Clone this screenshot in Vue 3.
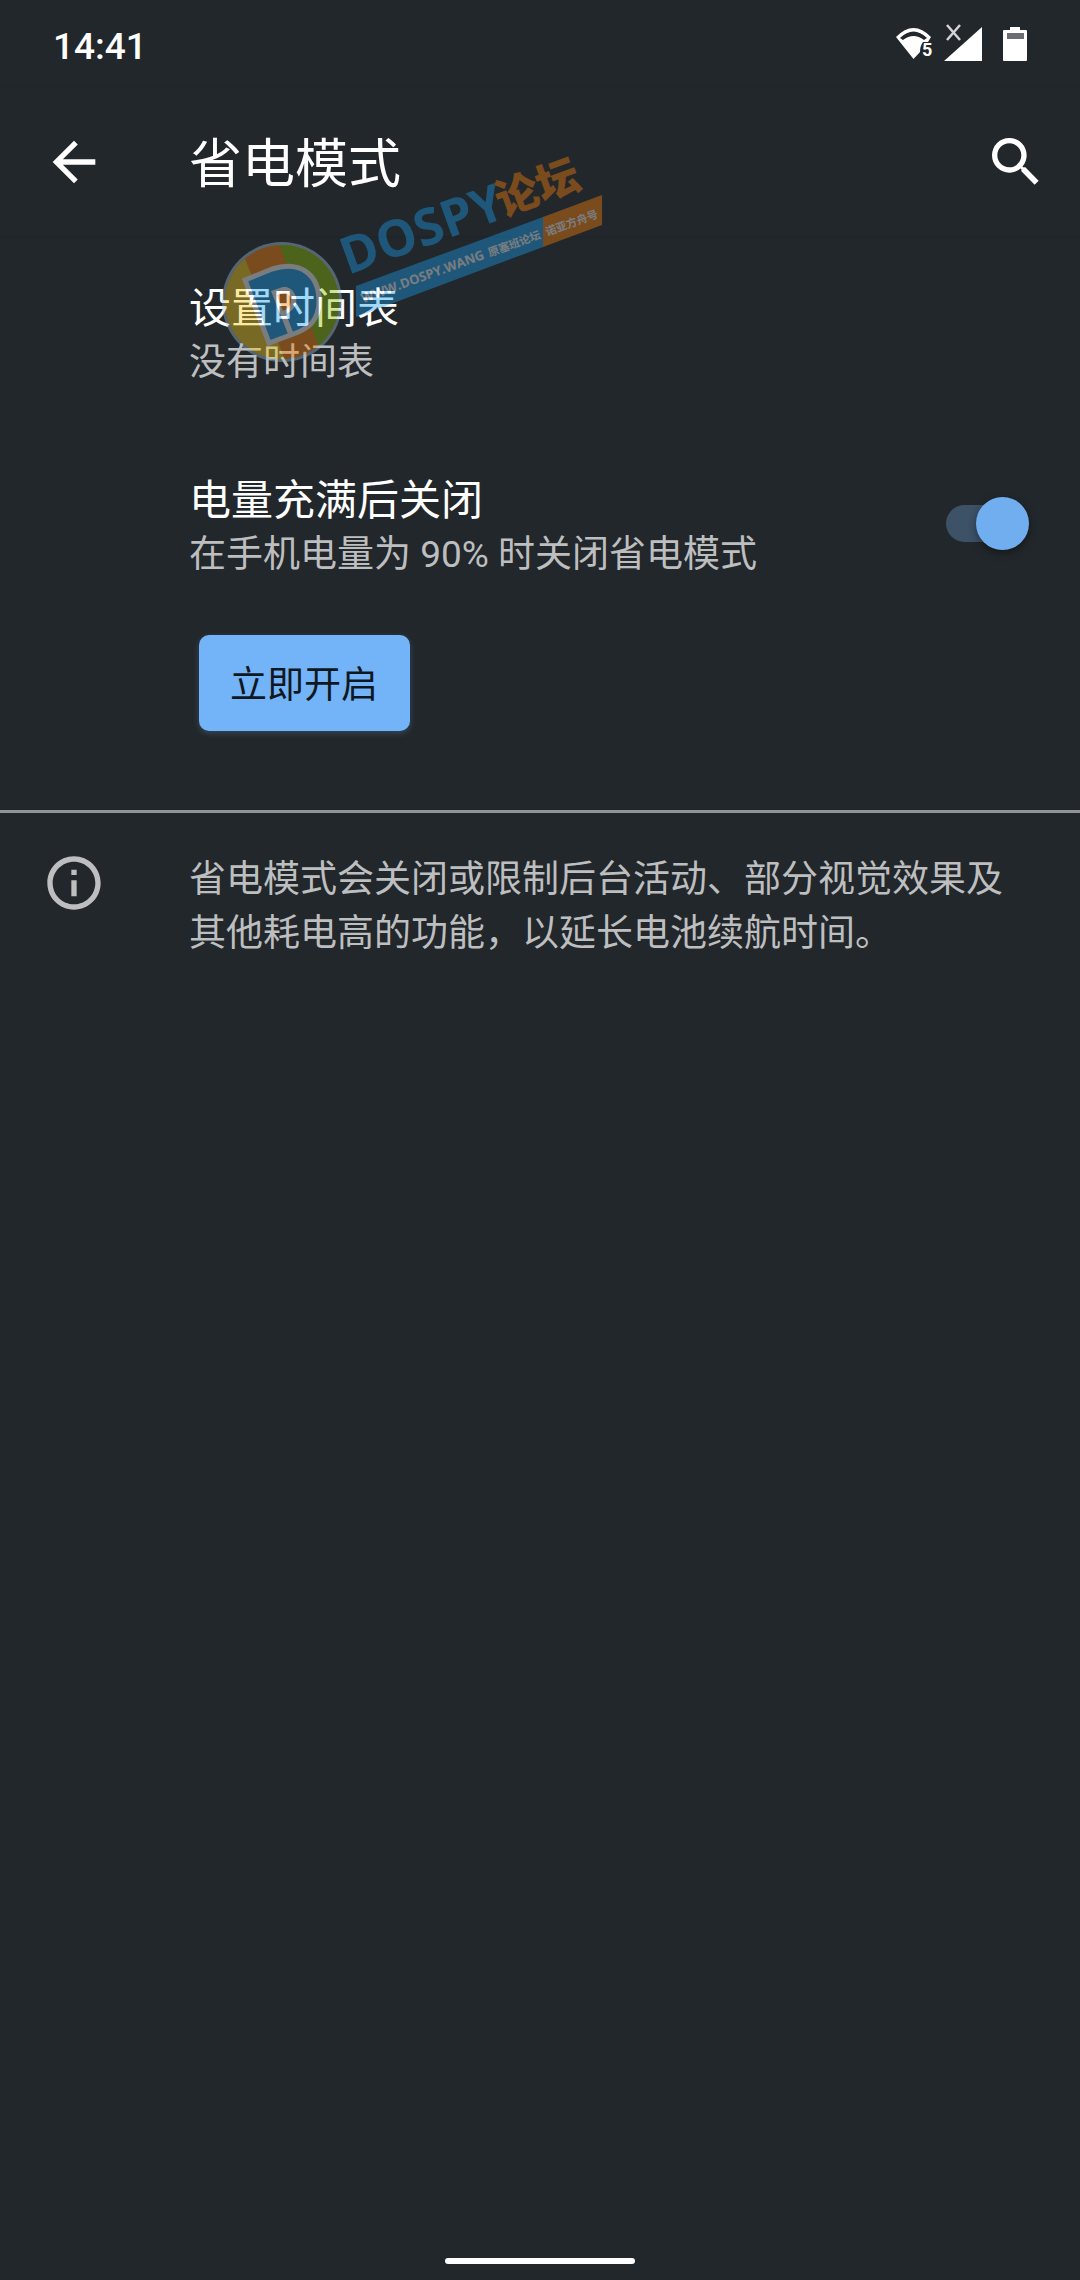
<template>
  <div class="screen">
    <div class="status-bar">
      <span class="clock">{{ clock }}</span>
      <div class="status-icons">
        <svg class="icon-wifi" viewBox="0 0 38 38" aria-hidden="true">
          <path d="M1 12Q18.500 -6 36 12L33 17H28Q25 21 25 27L18.500 34Z" fill="#fff" />
          <path d="M5 13Q18.500 0 32 13L29 15Q18.500 7 8 15Z" fill="#22272b" />
          <text x="27" y="31" class="wifi-band">5</text>
        </svg>
        <svg class="icon-signal" viewBox="0 0 40 38" aria-hidden="true">
          <path d="M39 2V36H1Z" fill="#fff" />
          <path d="M4 0L17 15M17 0L4 15" stroke="#d3d4d5" stroke-width="2.500" fill="none" />
        </svg>
        <svg class="icon-battery" viewBox="0 0 24 34" aria-hidden="true">
          <path d="M7 0H17V3H23Q24 3 24 4V33Q24 34 23 34H1Q0 34 0 33V4Q0 3 1 3H7Z" fill="#fff" />
          <path d="M4 6H21V12H4Z" fill="#6b6e70" />
        </svg>
      </div>
    </div>

    <header class="app-bar">
      <button class="icon-button" type="button" aria-label="返回">
        <svg viewBox="0 0 24 24"><path d="M20 11H7.830l5.590-5.590L12 4l-8 8 8 8 1.410-1.410L7.830 13H20z" fill="#fff" /></svg>
      </button>
      <h1 class="page-title">省电模式</h1>
      <button class="icon-button" type="button" aria-label="搜索">
        <svg viewBox="0 0 24 24"><path d="M15.500 14h-.79l-.28-.27A6.471 6.471 0 0 0 16 9.500 6.500 6.500 0 1 0 9.500 16c1.610 0 3.090-.59 4.230-1.570l.27.28v.79l5 4.990L20.490 19zM9.500 14C7.010 14 5 11.990 5 9.500S7.010 5 9.500 5 14 7.010 14 9.500 11.990 14 9.500 14z" fill="#fff" /></svg>
      </button>
    </header>

    <main>
      <a class="item" href="#schedule">
        <span class="item-text">
          <span class="item-title">设置时间表</span>
          <span class="item-summary">没有时间表</span>
        </span>
      </a>

      <label class="item" for="auto-off">
        <span class="item-text">
          <span class="item-title">电量充满后关闭</span>
          <span class="item-summary">在手机电量为 90% 时关闭省电模式</span>
        </span>
        <input id="auto-off" v-model="autoOff" class="switch" type="checkbox" role="switch">
      </label>

      <div class="action">
        <button class="primary" type="button">立即开启</button>
      </div>

      <section class="footer-note">
        <svg class="icon-info" viewBox="0 0 24 24" aria-hidden="true"><path d="M11 7h2v2h-2zm0 4h2v6h-2zm1-9C6.480 2 2 6.480 2 12s4.480 10 10 10 10-4.480 10-10S17.520 2 12 2zm0 18c-4.410 0-8-3.590-8-8s3.590-8 8-8 8 3.590 8 8-3.590 8-8 8z" fill="#bdbebf" /></svg>
        <p>省电模式会关闭或限制后台活动、部分视觉效果及其他耗电高的功能，以延长电池续航时间。</p>
      </section>
    </main>

    <div class="nav-handle"></div>

    <svg class="watermark" viewBox="216 150 392 220" aria-hidden="true">
      <defs>
        <clipPath id="badge"><circle cx="282" cy="302" r="57" /></clipPath>
      </defs>
      <circle cx="282" cy="302" r="60" fill="#9ec4dc" />
      <g clip-path="url(#badge)">
        <path d="M216 236H348V370H216Z" fill="#fb820a" />
        <path d="M216 236H236L289 370H216Z" fill="#facd1e" />
        <path d="M276 236H348V370H328Z" fill="#89be05" />
      </g>
      <path d="M245 280L272 269C301 260 319 275 319 301C319 320 309 328 296 333L269 343Z" fill="#1aa0f0" stroke="#fff" stroke-width="5" />
      <path d="M271 291L283 287C293 286 298 297 296 304C294 310 289 312 286 314L293 332L288 334Z" fill="#fff" />
      <path d="M277 295L284 293C289 293 292 298 291 302C290 307 287 309 283 311Z" fill="#fb820a" />
      <g transform="translate(348 275) rotate(-20)">
        <text x="0" y="0" class="mark-name" fill="#1aa0f0">DOSPY</text>
        <text x="165" y="-2" class="mark-forum" fill="#fb820a">论坛</text>
      </g>
      <path d="M356 286L543 217V247L356 317Z" fill="#1aa0f0" />
      <path d="M543 217L602 195V225L543 247Z" fill="#fb820a" />
      <g transform="translate(363 303) rotate(-20)" fill="#fff">
        <text x="0" y="0" class="mark-site">WWW.DOSPY.WANG</text>
        <text x="135" y="0" class="mark-small">原塞班论坛</text>
        <text x="196" y="0" class="mark-small">诺亚方舟号</text>
      </g>
    </svg>
  </div>
</template>

<script setup>
import { ref } from 'vue'

const clock = '14:41'
const autoOff = ref(true)
</script>

<style>
body {
  margin: 0;
  background: #22272b;
}
</style>

<style scoped>
.screen {
  position: relative;
  display: flex;
  flex-direction: column;
  min-height: 100vh;
  background: #22272b;
  color: #fff;
  font-family: Roboto, "Noto Sans CJK SC", sans-serif;
}

.status-bar {
  display: flex;
  align-items: center;
  justify-content: space-between;
  box-sizing: border-box;
  height: 88px;
  padding: 0 53px;
}

.clock {
  padding-top: 4px;
  font-size: 37px;
  font-weight: 500;
}

.status-icons {
  display: flex;
  align-items: center;
  gap: 10px;
}

.icon-wifi {
  width: 38px;
  height: 38px;
}

.icon-signal {
  width: 40px;
  height: 38px;
  overflow: visible;
}

.icon-battery {
  width: 24px;
  height: 34px;
  margin-left: 10px;
}

.wifi-band {
  fill: #fff;
  font-size: 18px;
  font-weight: 700;
}

.app-bar {
  display: flex;
  align-items: center;
  height: 148px;
  padding: 0 32px 0 42px;
  box-shadow: 0 1px 4px rgba(0, 0, 0, 0.1);
}

.page-title {
  flex: 1;
  margin: 0;
  padding: 6px 0 0 83px;
  font-size: 53px;
  font-weight: 400;
  line-height: 64px;
}

.icon-button {
  width: 64px;
  height: 64px;
  padding: 0;
  border: 0;
  background: none;
}

.icon-button svg {
  display: block;
}

main {
  flex: 1;
}

.item {
  display: flex;
  align-items: center;
  justify-content: space-between;
  min-height: 192px;
  padding: 0 42px 0 189px;
  color: inherit;
  text-decoration: none;
}

.item-text {
  display: flex;
  flex-direction: column;
  padding-top: 6px;
}

.item-title {
  font-size: 42px;
  line-height: 56px;
}

.item-summary {
  color: #bdbebf;
  font-size: 37px;
  line-height: 52px;
}

.switch {
  position: relative;
  width: 92px;
  height: 53px;
  margin: 0 8px 2px 0;
  appearance: none;
}

.switch::before {
  content: "";
  position: absolute;
  top: 8px;
  left: 8px;
  width: 74px;
  height: 37px;
  border-radius: 19px;
  background: #3d5167;
}

.switch::after {
  content: "";
  position: absolute;
  top: 0;
  left: 0;
  width: 53px;
  height: 53px;
  border-radius: 50%;
  background: #70aeef;
  box-shadow: 0 3px 8px rgba(0, 0, 0, 0.4);
}

.switch:checked::after {
  left: 38px;
}

.action {
  padding: 15px 42px 79px 199px;
}

.primary {
  display: block;
  height: 96px;
  padding: 0 32px 2px 31px;
  border: 0;
  border-radius: 10px;
  background: #73b3f7;
  box-shadow: 0 2px 6px rgba(115, 179, 247, 0.25);
  color: #10181f;
  font-family: inherit;
  font-size: 37px;
}

.footer-note {
  display: flex;
  align-items: flex-start;
  gap: 83px;
  padding: 38px 42px;
  border-top: 3px solid #919496;
  color: #bdbebf;
  font-size: 37px;
  line-height: 54px;
}

.footer-note p {
  margin: 0;
  padding-top: 2px;
}

.icon-info {
  flex: none;
  width: 64px;
  height: 64px;
}

.nav-handle {
  align-self: center;
  width: 190px;
  height: 6px;
  margin-bottom: 16px;
  border-radius: 3px;
  background: #fff;
}

.watermark {
  position: absolute;
  top: 150px;
  left: 216px;
  width: 392px;
  height: 220px;
  opacity: 0.4;
  pointer-events: none;
}

.mark-name {
  font-family: "Open Sans", "Noto Sans", sans-serif;
  font-size: 51px;
  font-weight: 700;
}

.mark-forum {
  font-size: 43px;
  font-weight: 900;
}

.mark-site {
  font-family: "Open Sans", "Noto Sans", sans-serif;
  font-size: 13px;
  font-weight: 700;
}

.mark-small {
  font-size: 11px;
  font-weight: 700;
}
</style>
